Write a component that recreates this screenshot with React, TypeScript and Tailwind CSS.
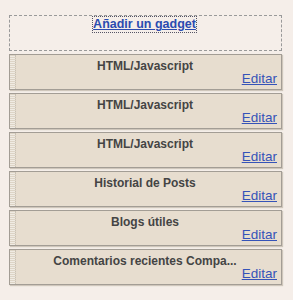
import React from "react";

const widgets = [
  "HTML/Javascript",
  "HTML/Javascript",
  "HTML/Javascript",
  "Historial de Posts",
  "Blogs útiles",
  "Comentarios recientes Compa...",
];

export default function App() {
  return (
    <div
      className="w-[293px] h-[300px] bg-[#f5eee9] pt-[15px] pl-[9px]"
      style={{ fontFamily: '"Liberation Sans", Arial, sans-serif' }}
    >
      <div className="w-[273px] flex flex-col gap-[3px]">
        <div className="h-[36px] border border-dashed border-[#9a9a9a] flex justify-center items-start pt-[1px] pr-[2px]">
          <a
            href="#"
            className="text-[12.5px] leading-[15px] font-bold text-[#2b4bb0] underline outline-1 outline-dotted outline-[#556]"
          >
            Añadir un gadget
          </a>
        </div>
        {widgets.map((t, i) => (
          <div
            key={i}
            className="h-[36px] border border-[#a39d95] bg-[#e7ddcf] shadow-[1px_1px_1px_#cfc6bb] flex"
          >
            <div className="w-[6px] h-full border-r border-dotted border-[#c9c1b4] bg-[repeating-linear-gradient(0deg,#f0ebe3_0px,#f0ebe3_1px,#ddd4c6_1px,#ddd4c6_2px)]" />
            <div className="flex-1 flex flex-col pt-[4px]">
              <div className="-ml-[7px] text-[12px] leading-[14px] font-bold text-[#444] text-center whitespace-nowrap">
                {t}
              </div>
              <div className="flex justify-end -mt-[2px] pr-[4px]">
                <a
                  href="#"
                  className="text-[13.5px] leading-[15px] text-[#3553b8] underline"
                >
                  Editar
                </a>
              </div>
            </div>
          </div>
        ))}
      </div>
    </div>
  );
}
